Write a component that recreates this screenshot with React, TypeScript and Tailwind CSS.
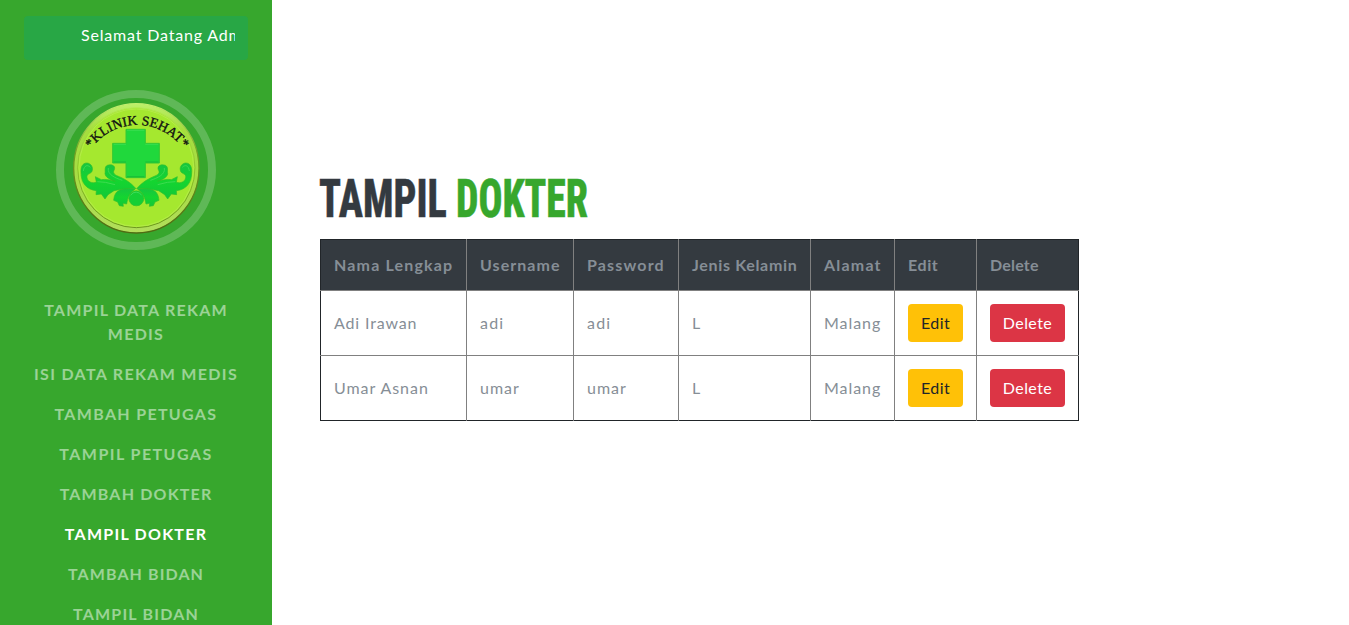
import React from "react";

const navItems = [
  { label: "Tampil Data Rekam Medis", tracking: "tracking-[1.25px]" },
  { label: "Isi Data Rekam Medis", tracking: "tracking-[1.33px]" },
  { label: "Tambah Petugas", tracking: "tracking-[1.32px]" },
  { label: "Tampil Petugas", tracking: "tracking-[1.45px]" },
  { label: "Tambah Dokter", tracking: "tracking-[1.17px]" },
  { label: "Tampil Dokter", tracking: "tracking-[1.24px]", active: true },
  { label: "Tambah Bidan", tracking: "tracking-[1.1px]" },
  { label: "Tampil Bidan", tracking: "tracking-[1.2px]" },
];

const columns = [
  { label: "Nama Lengkap", width: "w-[146px]", tracking: "tracking-[1.17px]" },
  { label: "Username", width: "w-[107px]", tracking: "tracking-[1.05px]" },
  { label: "Password", width: "w-[105px]", tracking: "tracking-[1.15px]" },
  { label: "Jenis Kelamin", width: "w-[132px]", tracking: "tracking-[0.67px]" },
  { label: "Alamat", width: "w-[84px]", tracking: "tracking-[1.2px]" },
  { label: "Edit", width: "w-[82px]", tracking: "tracking-[0.6px]" },
  { label: "Delete", width: "w-[102px]", tracking: "tracking-[0.2px]" },
];

const doctors = [
  { name: "Adi Irawan", nameTracking: "tracking-[0.85px]", user: "adi", userTracking: "tracking-[1.2px]", gender: "L", city: "Malang" },
  { name: "Umar Asnan", nameTracking: "tracking-[0.95px]", user: "umar", userTracking: "tracking-[1px]", gender: "L", city: "Malang" },
];

function Scroll() {
  return (
    <g stroke="#2fc02c" strokeWidth="2" strokeLinejoin="round">
      <path fill="url(#leaf)" d="M183 101C165 80 145 70 128 63C116 58 113 52 118 44C123 31 108 27 97 31C87 36 92 47 90 56C92 68 105 73 121 79C106 74 91 72 79 74L61 65L64 82C51 86 38 80 36 68C34 57 43 58 50 51C57 38 48 25 36 24C21 24 17 38 18 52C18 82 33 104 64 107L63 119L79 117L90 132L99 119L117 107C138 102 160 101 183 101Z" />
      <path fill="url(#leaf)" d="M180 103C159 98 137 102 126 110C117 120 117 130 116 136L128 141L133 152L145 154L144 145L155 147C158 129 163 114 180 103Z" />
      <path fill="none" stroke="#3cdc50" strokeWidth="3" d="M25 48C27 31 38 28 46 37M100 39C96 58 120 69 142 76M67 80L91 82L120 89" />
    </g>
  );
}

function Logo() {
  return (
    <svg className="block size-40" viewBox="18 18 480 480">
      <defs>
        <linearGradient id="rim" x1="0" y1="0" x2="0" y2="1">
          <stop offset="0" stopColor="#bdf06a" />
          <stop offset="0.2" stopColor="#a5de3e" />
          <stop offset="0.7" stopColor="#a9dc48" />
          <stop offset="1" stopColor="#b2de5c" />
        </linearGradient>
        <linearGradient id="edge" x1="0" y1="0" x2="0" y2="1">
          <stop offset="0" stopColor="#c3ef6e" />
          <stop offset="0.4" stopColor="#6f9d20" />
          <stop offset="1" stopColor="#4f6b12" />
        </linearGradient>
        <linearGradient id="leaf" x1="0" y1="0" x2="0" y2="1">
          <stop offset="0" stopColor="#16c540" />
          <stop offset="0.5" stopColor="#14d530" />
          <stop offset="1" stopColor="#12c838" />
        </linearGradient>
        <linearGradient id="groove" x1="0" y1="0" x2="0" y2="1">
          <stop offset="0" stopColor="#b4ea52" />
          <stop offset="0.5" stopColor="#8fc42e" />
          <stop offset="1" stopColor="#6c9420" />
        </linearGradient>
      </defs>
      <circle cx="258" cy="258" r="228" fill="none" stroke="#fff" strokeOpacity="0.2" strokeWidth="24" />
      <ellipse cx="259" cy="253" rx="188" ry="194" fill="url(#rim)" stroke="url(#edge)" strokeWidth="4" />
      <ellipse cx="259" cy="251" rx="176" ry="180" fill="#a5e82f" stroke="url(#groove)" strokeWidth="3" />
      <ellipse cx="259" cy="251" rx="172" ry="176" fill="#a5e82f" stroke="#b4ec48" strokeWidth="3" />
      <path id="arc" d="M124 194A168 168 0 0 1 406 206" fill="none" />
      <text fill="#111" stroke="#111" strokeWidth="1" fontSize="41" fontFamily="'Liberation Serif', serif">
        <textPath href="#arc" textLength="321">*KLINIK SEHAT*</textPath>
      </text>
      <path d="M228 136H286V178H328V237H286V281H228V237H188V178H228Z" fill="#20d83c" stroke="#34c834" strokeWidth="3" strokeLinejoin="round" />
      <path d="M231 139H283M191 181H228M286 181H325" stroke="#38de50" strokeWidth="3" />
      <path d="M231 278H283M191 234H228M286 234H325" stroke="#18bd38" strokeWidth="3" />
      <g transform="translate(75 213)"><Scroll /></g>
      <g transform="translate(443 213) scale(-1 1)"><Scroll /></g>
      <circle cx="259" cy="343" r="22.5" fill="#15cf35" stroke="#2fc02c" strokeWidth="2" />
      <path d="M242 334A19 19 0 0 1 275 334" fill="none" stroke="#3cdc5a" strokeWidth="3" />
    </svg>
  );
}

export default function App() {
  return (
    <div className="flex h-[625px] w-full overflow-hidden bg-white font-['Lato',sans-serif] text-base leading-6 text-[#868e96]">
      <aside className="flex w-[272px] shrink-0 flex-col items-center overflow-hidden bg-[#37a72d] px-6 pt-4">
        <div className="h-11 w-full shrink-0 rounded bg-[#28a745] pt-[7px] pr-[13px] pl-3 text-white">
          <div className="overflow-hidden pl-[45px] whitespace-nowrap tracking-[0.82px]">Selamat Datang Admin</div>
        </div>
        <div className="mt-[30px] shrink-0"><Logo /></div>
        <nav className="mt-10 w-full">
          <ul>
            {navItems.map((item) => (
              <li key={item.label}>
                <a className={`block px-2 py-2 text-center font-bold uppercase ${item.tracking} ${item.active ? "text-white" : "text-white/50"}`}>
                  {item.label}
                </a>
              </li>
            ))}
          </ul>
        </nav>
      </aside>
      <main className="flex flex-col items-start pt-[168px] pl-12">
        <h1 className="flex h-[60px] font-['Roboto',sans-serif] text-[54.5px] leading-[60px] font-extrabold whitespace-nowrap [-webkit-text-stroke:0.5px] [font-stretch:75%]">
          <span className="-ml-px block w-[137px] origin-left scale-x-[0.738] text-[#343a40]">TAMPIL</span>
          <span className="block w-[135px] origin-left scale-x-[0.73] text-[#37a72d]">DOKTER</span>
        </h1>
        <table className="mt-[11px] w-[759px] table-fixed border-collapse border border-[#212529]">
          <thead>
            <tr className="h-[51px] bg-[#343a40]">
              {columns.map((c) => (
                <th key={c.label} className={`border-l border-[#808080] p-0 pl-[13px] text-left font-bold whitespace-nowrap first:border-l-0 ${c.width} ${c.tracking}`}>
                  {c.label}
                </th>
              ))}
            </tr>
          </thead>
          <tbody className="[&_td]:border-t [&_td]:border-l [&_td]:border-[#808080] [&_td]:p-0 [&_td]:pl-[13px] [&_td:first-child]:border-l-0">
            {doctors.map((d) => (
              <tr key={d.name} className="h-[65px]">
                <td className={d.nameTracking}>{d.name}</td>
                <td className={d.userTracking}>{d.user}</td>
                <td className={d.userTracking}>{d.user}</td>
                <td>{d.gender}</td>
                <td className="tracking-[0.95px]">{d.city}</td>
                <td>
                  <button className="block h-[38px] w-[55px] rounded bg-[#ffc107] text-center tracking-[0.45px] text-[#212529]">Edit</button>
                </td>
                <td>
                  <button className="block h-[38px] w-[75px] rounded bg-[#dc3545] text-center tracking-[0.45px] text-white">Delete</button>
                </td>
              </tr>
            ))}
          </tbody>
        </table>
      </main>
    </div>
  );
}
